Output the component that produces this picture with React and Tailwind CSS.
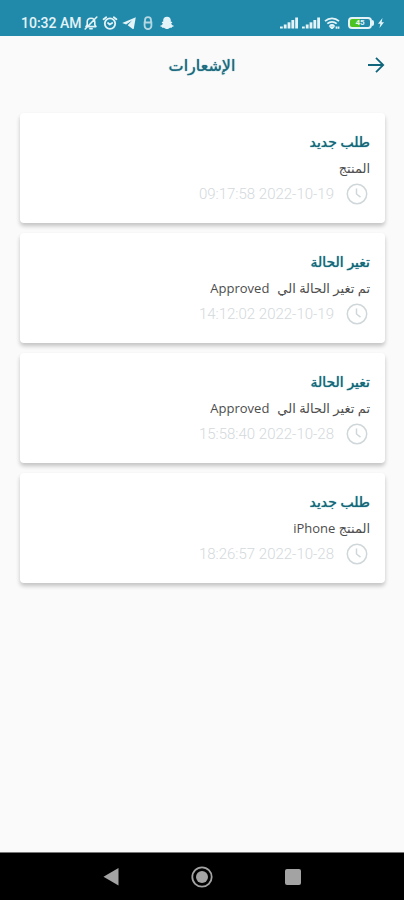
const NOTIFICATIONS = [
  { id: 1, title: 'طلب جديد', body: 'المنتج', time: '09:17:58', date: '2022-10-19' },
  { id: 2, title: 'تغير الحالة', body: 'تم تغير الحالة الي', value: 'Approved', time: '14:12:02', date: '2022-10-19' },
  { id: 3, title: 'تغير الحالة', body: 'تم تغير الحالة الي', value: 'Approved', time: '15:58:40', date: '2022-10-28' },
  { id: 4, title: 'طلب جديد', body: 'المنتج iPhone', time: '18:26:57', date: '2022-10-28' },
]

function SignalIcon() {
  return (
    <svg className="w-[18px] h-3" viewBox="0 0 18 12" fill="currentColor">
      <rect x="0" y="9.5" width="2.8" height="2" />
      <rect x="3.8" y="7.5" width="2.8" height="4" />
      <rect x="7.6" y="5.3" width="2.8" height="6.2" />
      <rect x="11.4" y="3" width="2.8" height="8.5" />
      <rect x="15.2" y="0.5" width="2.8" height="11" />
    </svg>
  )
}

function StatusBar() {
  return (
    <div className="h-9 shrink-0 bg-[#218aab] text-[#e4f3f7] flex items-end justify-between pl-[21px] pr-5 pb-[5px]">
      <div className="flex items-center h-4">
        <span className="font-[Roboto] font-medium text-sm leading-4 w-[61px] whitespace-nowrap">10:32 AM</span>
        <div className="flex items-center gap-1 pl-0.5">
          {/* Muted bell */}
          <svg className="w-3.5 h-3.5" viewBox="0 0 14 14" fill="none" stroke="currentColor" strokeWidth="1.6" strokeLinecap="round" strokeLinejoin="round">
            <path d="M2 10.6h10l-1.2-1.8V6c0-2.3-1.4-3.8-3.8-3.8S3.2 3.7 3.2 6v2.8L2 10.6M5.8 12.8h2.4M12.8 1L1.2 13" />
          </svg>
          {/* Alarm */}
          <svg className="w-4 h-3.5" viewBox="0 0 16 14" fill="none" stroke="currentColor" strokeWidth="1.8" strokeLinecap="round" strokeLinejoin="round">
            <circle cx="8" cy="7.6" r="5.2" />
            <path d="M1.6 3.2l2.6-2M14.4 3.2l-2.6-2M6 7l1.8 1.6L10.2 7" />
          </svg>
          {/* Telegram */}
          <svg className="w-3.5 h-3.5" viewBox="0 0 14 14" fill="currentColor">
            <path d="M13.8 1.2L.2 7l3.9 1.6L10 4.5 5.7 9.3l5 3.6c.6.3 1 .1 1.1-.5L13.8 1.2z" />
          </svg>
          {/* App badge */}
          <svg className="w-4 h-3.5 opacity-75" viewBox="0 0 16 14" fill="none" stroke="currentColor" strokeWidth="1.8">
            <path d="M5 6V4.2a3 3 0 0 1 6 0V6M4.6 6.5h6.8v3.2a3.4 3.4 0 0 1-6.8 0z" />
          </svg>
          {/* Snapchat */}
          <svg className="w-3.5 h-3.5" viewBox="0 0 14 14" fill="currentColor">
            <path d="M7 .8C4.5.8 3.2 2.4 3.2 4.4v1.4c-.6.1-1.4-.1-1.5.4-.1.6.8.9 1.2 1.2C2.5 8.6 1.4 9.3.2 9.700c-.3.6.8 1 1.6 1.1.2.4.1.9.6.9.6 0 1.4-.1 2.1.3.7.5 1.4 1.1 2.5 1.1s1.8-.6 2.5-1.1c.7-.4 1.5-.3 2.1-.3.5 0 .4-.5.6-.9.8-.1 1.9-.5 1.6-1.1-1.2-.4-2.3-1.1-2.7-2.3.4-.3 1.3-.6 1.2-1.2-.1-.5-.9-.3-1.5-.4V4.4C10.8 2.4 9.5.8 7 .8z" />
          </svg>
        </div>
      </div>
      <div className="flex items-center gap-1 h-4">
        <SignalIcon />
        <SignalIcon />
        {/* Wi-Fi */}
        <svg className="w-4 h-3" viewBox="0 0 16 12" fill="none" stroke="currentColor" strokeWidth="1.7">
          <path d="M1 4.2C5 .4 11 .4 15 4.2M3.3 6.7c2.7-2.5 6.7-2.5 9.4 0M5.6 9.1c1.4-1.3 3.4-1.3 4.8 0" />
          <path d="M8 11.5l-1.3-1.3h2.6zM12.500 9.5v2.2M14.6 9.5v2.2" />
        </svg>
        {/* Battery */}
        <div className="flex items-center ml-1">
          <div className="w-6 h-3 rounded border-2 border-[#e4f3f7] bg-gradient-to-r from-[#4cc31f] from-50% to-[#218aab] to-50% font-[Roboto] font-bold text-[8px] leading-2 text-center">45</div>
          <div className="w-0.5 h-1.5 bg-[#e4f3f7] rounded-r" />
        </div>
        <svg className="w-1.5 h-3" viewBox="0 0 6 12" fill="currentColor">
          <path d="M4.5 1L0 6.8h2.4L1.5 11 6 5.2H3.6z" />
        </svg>
      </div>
    </div>
  )
}

function Header() {
  return (
    <header className="grid grid-cols-[1fr_auto_1fr] items-center h-[57px] px-[18px]">
      <button type="button" aria-label="رجوع" className="justify-self-start text-[#12667c]">
        <svg className="w-5 h-5" viewBox="0 0 20 20" fill="none" stroke="currentColor" strokeWidth="1.8">
          <path d="M2 10H17.5M10 2.8L17.2 10 10 17.2" />
        </svg>
      </button>
      <h1 className="text-base leading-6 text-[#1c6b80] text-shadow-[0_0_1px_#1c6b80]">الإشعارات</h1>
    </header>
  )
}

function ClockIcon() {
  return (
    <svg className="w-[22px] h-[22px] shrink-0 text-[#cfd7da]" viewBox="0 0 22 22" fill="none" stroke="currentColor" strokeWidth="1.5">
      <circle cx="11" cy="11" r="9.7" />
      <path d="M10.5 5.5V11l4 3.2" />
    </svg>
  )
}

function NotificationCard({ item }) {
  return (
    <li className="bg-white rounded-sm shadow-[0_3px_4px_rgba(0,0,0,0.22)] px-[15px] py-4">
      <h2 className="text-sm leading-[26px] text-[#12687a] text-shadow-[0_0_1px_#12687a]">{item.title}</h2>
      <p className="text-[13px] leading-[26px] text-[#4d4d4d] flex gap-2">
        <span>{item.body}</span>
        {item.value && <span>{item.value}</span>}
      </p>
      <div className="flex items-center gap-3 ps-0.5 font-[Roboto] text-[15px] leading-[26px] font-light text-[#d3d9dc]">
        <ClockIcon />
        <time dir="ltr" dateTime={`${item.date}T${item.time}`}>{item.time} {item.date}</time>
      </div>
    </li>
  )
}

function NavBar() {
  return (
    <nav className="h-12 shrink-0 bg-black border-t border-[#777777] text-[#a3a3a3] flex items-center justify-center gap-[69px]">
      <button type="button" aria-label="Back">
        <svg className="w-[22px] h-[22px]" viewBox="0 0 22 22" fill="currentColor">
          <path d="M18.5 2v17.5L3.5 10.8z" />
        </svg>
      </button>
      <button type="button" aria-label="Home">
        <svg className="w-[22px] h-[22px]" viewBox="0 0 22 22">
          <circle cx="11" cy="11" r="9.7" fill="none" stroke="currentColor" strokeWidth="1.8" />
          <circle cx="11" cy="11" r="6" fill="currentColor" />
        </svg>
      </button>
      <button type="button" aria-label="Recent apps">
        <svg className="w-[22px] h-[22px]" viewBox="0 0 22 22" fill="currentColor">
          <rect x="3" y="3" width="16" height="16" rx="2" />
        </svg>
      </button>
    </nav>
  )
}

export default function App() {
  return (
    <div className="min-h-screen flex flex-col bg-[#fafafa]">
      <StatusBar />
      <div dir="rtl" className="flex-1 font-['Open_Sans','DejaVu_Sans',sans-serif]">
        <Header />
        <main className="ps-[19px] pe-5 pt-5">
          <ul className="flex flex-col gap-2.5">
            {NOTIFICATIONS.map((item) => (
              <NotificationCard key={item.id} item={item} />
            ))}
          </ul>
        </main>
      </div>
      <NavBar />
    </div>
  )
}
